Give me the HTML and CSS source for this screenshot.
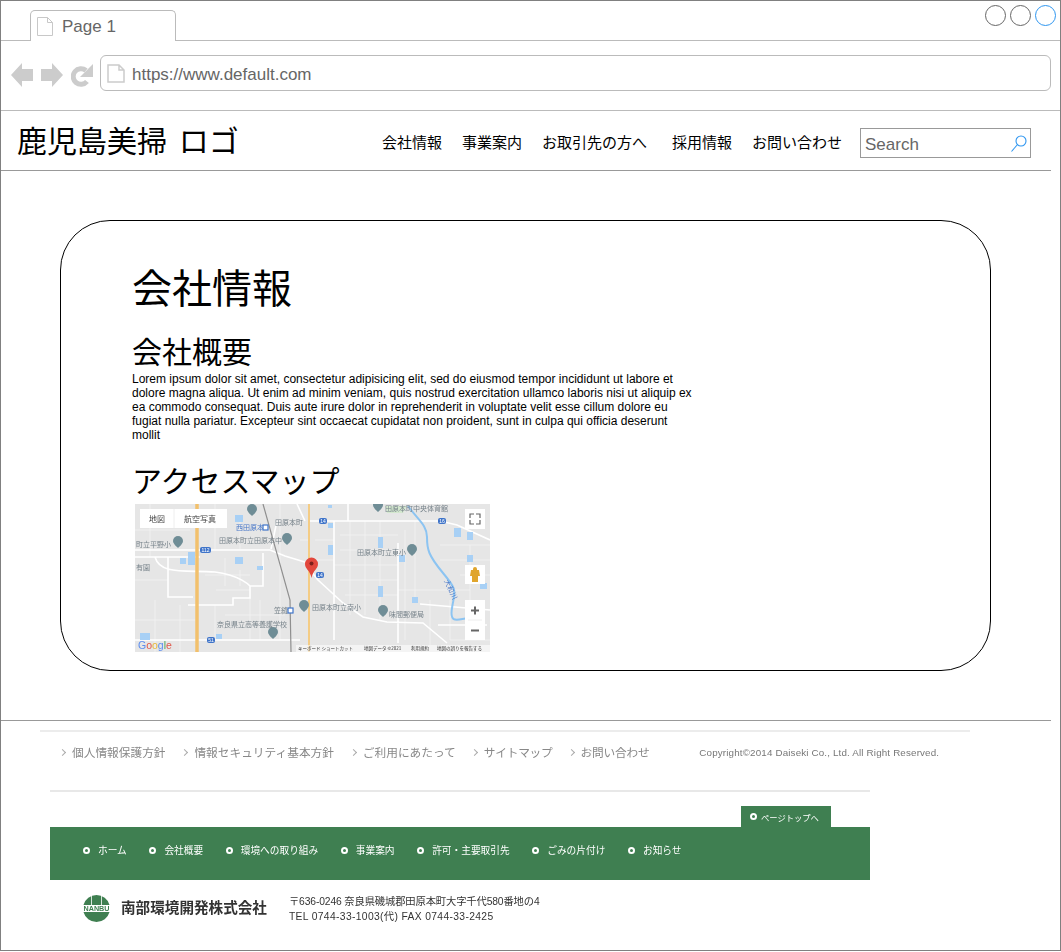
FILE: index.html
```html
<!DOCTYPE html>
<html lang="ja">
<head>
<meta charset="utf-8">
<title>鹿児島美掃</title>
<link rel="stylesheet" href="styles.css">
</head>
<body>
<div class="window">
  <div class="tabbar">
    <div class="tab">
      <svg class="file-icon" viewBox="0 0 16 19"><path d="M.5.5h10l5 5v13H.5zM10.500.5v5h5"/></svg>
      <span>Page 1</span>
    </div>
    <div class="controls"><i class="dot"></i><i class="dot"></i><i class="dot dot-active"></i></div>
  </div>
  <div class="toolbar">
    <svg class="nav-icon" viewBox="0 0 23 24"><path d="M0 12 11 0v6h11v12H11v6z"/></svg>
    <svg class="nav-icon" viewBox="0 0 23 24"><path d="M22 12 11 0v6H0v12h11v6z"/></svg>
    <svg class="nav-icon" viewBox="0 0 23 24"><path d="M16 18.500A7.800 7.800 0 1 1 15 7.500" class="reload"/><path d="M22 1v13H9z"/></svg>
    <div class="urlbar">
      <svg class="page-icon" viewBox="0 0 18 19"><path d="M1 1h11l5 5v12H1zM12 1v5h5"/></svg>
      <span>https://www.default.com</span>
    </div>
  </div>
  <header class="site-header">
    <div class="logo">鹿児島美掃 ロゴ</div>
    <nav class="main-nav">
      <a>会社情報</a><a>事業案内</a><a class="nav-wide">お取引先の方へ</a><a>採用情報</a><a>お問い合わせ</a>
    </nav>
    <div class="search">
      <span>Search</span>
      <svg class="search-icon" viewBox="0 0 16 17"><circle cx="10" cy="6" r="5"/><path d="M6.500 9.500 .5 16.500"/></svg>
    </div>
  </header>
  <main class="panel">
    <h1>会社情報</h1>
    <h2>会社概要</h2>
    <p>Lorem ipsum dolor sit amet, consectetur adipisicing elit, sed do eiusmod tempor incididunt ut labore et dolore magna aliqua. Ut enim ad minim veniam, quis nostrud exercitation ullamco laboris nisi ut aliquip ex ea commodo consequat. Duis aute irure dolor in reprehenderit in voluptate velit esse cillum dolore eu fugiat nulla pariatur. Excepteur sint occaecat cupidatat non proident, sunt in culpa qui officia deserunt mollit</p>
    <h2 class="access">アクセスマップ</h2>
    <svg class="map" viewBox="135 504 355 148">
      <rect class="m-bg" x="135" y="504" width="355" height="148"/>
      <g class="m-minor">
        <path d="M135 530H190M150 504V557M215 504V549M240 520V549M135 580H168M135 620H197M155 600V652M180 605V652M215 605V640M250 598V640M205 575H250M225 558V586M240 570V586M280 504V640M315 540H334M315 560H334M340 535H398M340 550H398M334 565H398M340 580H398M345 595H398M350 521V615M365 521V615M380 521V620M405 530V640M398 590H470M415 521V600M430 600V645M450 600V640M470 545V625M440 545H490M440 560H490M460 575H490M450 640H490M300 540H309M216 590H250M260 600V640M225 615H285"/>
      </g>
      <g class="m-road">
        <path d="M135 550H270L285 556 308 563M135 557H200M168 557V597H193M188 605H233V598H250V586H263V553M155 557C160 575 185 570 215 572 240 575 250 586 250 586M135 640H300M310 521H440L457 525 490 540M348 504V521M310 570 318 580 343 603 363 617 387 622 423 623 447 643M334 521V640M398 543V643M438 625H487M420 604 490 610M297 504 305 521M271 549 277 521"/>
      </g>
      <path class="m-highway" d="M197 504V652"/>
      <path class="m-highway-thin" d="M309 504V652"/>
      <path class="m-rail" d="M263 504 290 600 291 652"/>
      <path class="m-river" d="M408 506C418 520 427 525 427 537S428 555 443 573 455 590 452 608 460 618 470 618"/>
      <g class="m-water">
        <rect x="188" y="552" width="7" height="13"/><rect x="180" y="558" width="6" height="6"/>
        <rect x="235" y="557" width="8" height="7"/><rect x="257" y="566" width="6" height="4"/>
        <rect x="140" y="633" width="10" height="7"/><rect x="216" y="634" width="6" height="5"/>
        <rect x="235" y="515" width="8" height="7"/><rect x="328" y="545" width="5" height="10"/>
        <rect x="378" y="537" width="5" height="11"/><rect x="378" y="586" width="5" height="11"/>
        <rect x="412" y="597" width="6" height="6"/><rect x="399" y="555" width="6" height="7"/>
        <rect x="454" y="528" width="7" height="9"/><rect x="467" y="532" width="6" height="8"/>
        <rect x="467" y="555" width="6" height="7"/><rect x="480" y="583" width="7" height="6"/>
        <rect x="328" y="523" width="5" height="5"/><rect x="328" y="505" width="4" height="3"/>
      </g>
      <path class="m-park" d="M385 506h22l-4 7h-16z"/>
      <g class="m-pin">
        <path d="M247 509a5 5 0 0 1 10 0c0 3-5 7-5 7s-5-4-5-7z"/>
        <path d="M173 541a5 5 0 0 1 10 0c0 3-5 7-5 7s-5-4-5-7z"/>
        <path d="M282 538a5 5 0 0 1 10 0c0 3-5 7-5 7s-5-4-5-7z"/>
        <path d="M299 605a5 5 0 0 1 10 0c0 3-5 7-5 7s-5-4-5-7z"/>
        <path d="M268 632a5 5 0 0 1 10 0c0 3-5 7-5 7s-5-4-5-7z"/>
        <path d="M407 549a5 5 0 0 1 10 0c0 3-5 7-5 7s-5-4-5-7z"/>
        <path d="M378 610a5 5 0 0 1 10 0c0 3-5 7-5 7s-5-4-5-7z"/>
        <path d="M373 505a5 5 0 0 1 10 0c0 3-5 7-5 7s-5-4-5-7z"/>
      </g>
      <g class="m-label">
        <text x="275" y="525">田原本町</text>
        <text class="m-blue" x="236" y="529.500">西田原本</text>
        <text x="219" y="542.500">田原本町立田原本中</text>
        <text x="136" y="546.500">町立平野小</text>
        <text x="217" y="626.500">奈良県立高等養護学校</text>
        <text x="274" y="612.500">笠縫</text>
        <text x="357" y="554.500">田原本町立東小</text>
        <text x="312" y="609.500">田原本町立南小</text>
        <text x="389" y="616.500">味間郵便局</text>
        <text x="385" y="510.500">田原本町中央体育館</text>
        <text x="136" y="569.500">有園</text>
        <text class="m-blue" transform="translate(444 581) rotate(65)">大和川</text>
      </g>
      <g class="m-shield">
        <rect x="200" y="547" width="11" height="6" rx="2"/><text x="205.500" y="552">112</text>
        <rect x="207" y="637" width="8" height="6" rx="2"/><text x="211" y="642">51</text>
        <rect x="319" y="518" width="8" height="6" rx="2"/><text x="323" y="523">14</text>
        <rect x="438" y="518" width="8" height="6" rx="2"/><text x="442" y="523">16</text>
        <rect x="316" y="572" width="8" height="6" rx="2"/><text x="320" y="577">14</text>
      </g>
      <g class="m-station"><rect x="263" y="525" width="5" height="5"/><rect x="288" y="608" width="5" height="5"/></g>
      <path class="m-marker" d="M305 564a6.500 6.500 0 0 1 13 0c0 5-5 6-6.500 14-1.500-8-6.500-9-6.500-14z"/>
      <circle class="m-marker-dot" cx="311.500" cy="563.500" r="2"/>
      <rect class="m-attr-bg" x="296" y="645" width="194" height="7"/>
      <g class="m-btn">
        <rect x="140" y="509" width="87" height="19"/>
        <rect x="465" y="509" width="20" height="20"/>
        <rect x="465" y="565" width="20" height="19"/>
        <rect x="465" y="600" width="20" height="40"/>
      </g>
      <path class="m-sep" d="M174 509V528M468 620H482"/>
      <g class="m-btn-text">
        <text x="157" y="522">地図</text>
        <text x="200" y="522">航空写真</text>
      </g>
      <path class="m-full" d="M470 518v-4h4M476 514h4v4M480 520v4h-4M474 524h-4v-4"/>
      <path class="m-peg" d="M473 569a2 2 0 0 1 4 0v1h2l1 6h-2v6h-6v-6h-2l1-6h2z"/>
      <path class="m-zoom" d="M471 610.500h8M475 606.500v8M471 630.500h8"/>
      <text class="m-google" x="138" y="649"><tspan class="g-b">G</tspan><tspan class="g-r">o</tspan><tspan class="g-y">o</tspan><tspan class="g-b">g</tspan><tspan class="g-g">l</tspan><tspan class="g-r">e</tspan></text>
      <g class="m-attr">
        <text x="298" y="650">キーボード ショートカット</text>
        <text x="364" y="650">地図データ ©2021</text>
        <text x="411" y="650">利用規約</text>
        <text x="437" y="650">地図の誤りを報告する</text>
      </g>
    </svg>
  </main>
  <footer class="site-footer">
    <div class="legal">
      <a>個人情報保護方針</a><a>情報セキュリティ基本方針</a><a>ご利用にあたって</a><a class="tight">サイトマップ</a><a class="tight">お問い合わせ</a>
      <span class="copyright">Copyright©2014 Daiseki Co., Ltd. All Right Reserved.</span>
    </div>
    <div class="footer-main">
      <div class="top-link"><a class="bullet">ページトップへ</a></div>
      <nav class="green-nav">
        <a class="bullet">ホーム</a><a class="bullet">会社概要</a><a class="bullet">環境への取り組み</a><a class="bullet">事業案内</a><a class="bullet">許可・主要取引先</a><a class="bullet">ごみの片付け</a><a class="bullet">お知らせ</a>
      </nav>
      <div class="company">
        <svg class="company-logo" viewBox="0 0 27 27">
          <path class="logo-green" d="M.47 10A13.500 13.500 0 0 1 26.530 10zM.47 17h26.060A13.500 13.500 0 0 1 .47 17z"/>
          <path class="logo-cut" d="M8.500 0V10M18.500 0V10"/>
          <text x="13.500" y="16">NANBU</text>
        </svg>
        <strong>南部環境開発株式会社</strong>
        <address><span class="addr-street">〒636-0246 奈良県磯城郡田原本町大字千代580番地の4</span><span class="addr-tel">TEL 0744-33-1003(代) FAX 0744-33-2425</span></address>
      </div>
    </div>
  </footer>
</div>
</body>
</html>
```
FILE: styles.css
```css
*, *::before { box-sizing: border-box; }
html, body { margin: 0; padding: 0; background: #fff; }
body { font-family: "Liberation Sans", "Noto Sans CJK JP", sans-serif; color: #000; overflow: hidden; }
a { color: inherit; text-decoration: none; }
h1, h2, p, address { margin: 0; font-style: normal; font-weight: 400; }

.window { width: 1061px; height: 951px; border: 1px solid #808080; overflow: hidden; }

.tabbar { height: 40px; display: flex; justify-content: space-between; border-bottom: 1px solid #bbb; }
.tab { width: 146px; height: 31px; margin: 9px 0 -1px 29px; display: flex; align-items: center; gap: 9px; padding: 0 0 0 6px; background: #fff; border: 1px solid #bbb; border-bottom: 0; border-radius: 5px 5px 0 0; color: #666; font-size: 17px; }
.tab span { padding-top: 1px; }
.file-icon { width: 16px; height: 19px; fill: none; stroke: #c8c8c8; }
.controls { display: flex; gap: 4px; padding: 4px 4px 0 0; }
.dot { width: 21px; height: 21px; border: 1px solid #666; border-radius: 50%; }
.dot-active { border-color: #2e96f0; }

.toolbar { height: 70px; padding: 14px 9px 0 10px; display: flex; gap: 7px; align-items: flex-start; border-bottom: 1px solid #bbb; }
.nav-icon { width: 23px; height: 24px; margin-top: 8px; fill: #ccc; flex: none; }
.nav-icon .reload { fill: none; stroke: #ccc; stroke-width: 5; }
.urlbar { flex: 1; height: 36px; margin-left: -1px; display: flex; align-items: center; gap: 7px; padding: 0 0 0 6px; border: 1px solid #bbb; border-radius: 6px; color: #666; font-size: 17px; }
.urlbar span { padding-top: 3px; }
.page-icon { width: 18px; height: 19px; fill: none; stroke: #ccc; stroke-width: 1.500; }

.site-header { width: 1050px; height: 60px; display: flex; align-items: center; padding: 0 0 0 16px; border-bottom: 1px solid #999; }
.logo { font-size: 30px; line-height: 40px; margin-top: -4px; white-space: pre; word-spacing: 5px; font-family: "Noto Sans CJK JP", sans-serif; }
.main-nav { margin-left: auto; display: flex; gap: 20px; font-size: 15px; margin-right: 18px; margin-top: 1px; font-family: "Noto Sans CJK JP", sans-serif; }
.nav-wide { margin-right: 5px; }
.search { width: 171px; height: 30px; margin-right: 20px; margin-top: 5px; display: flex; align-items: center; justify-content: space-between; padding: 0 3px 0 4px; border: 1px solid #999; color: #666; font-size: 17px; }
.search span { padding-top: 3px; }
.search-icon { width: 16px; height: 17px; fill: none; stroke: #2e96f0; stroke-width: 1.100; }

.panel { width: 931px; height: 451px; margin: 49px 0 0 59px; padding: 41px 0 0 71px; border: 1px solid #000; border-radius: 50px; }
.panel h1 { font-size: 40px; line-height: 48px; font-family: "Noto Sans CJK JP", sans-serif; }
.panel h2 { font-size: 30px; line-height: 36px; margin-top: 22px; font-family: "Noto Sans CJK JP", sans-serif; }
.panel p { width: 562px; font-size: 12px; line-height: 14px; margin-top: 4px; }
.panel .access { margin-top: 19px; }
.map { display: block; width: 355px; height: 148px; margin: 7px 0 0 3px; filter: blur(.4px); font-family: "Noto Sans CJK JP", sans-serif; }
.m-bg { fill: #e6e6e6; }
.m-minor path { fill: none; stroke: #f3f3f3; stroke-width: .8; }
.m-road path { fill: none; stroke: #fff; stroke-width: 1.600; }
.m-highway { fill: none; stroke: #f2c06c; stroke-width: 3.500; }
.m-highway-thin { fill: none; stroke: #f4cc85; stroke-width: 2; }
.m-rail { fill: none; stroke: #8f8f8f; stroke-width: 1.200; }
.m-river { fill: none; stroke: #8cc4f2; stroke-width: 2; }
.m-water rect { fill: #a8d0f5; }
.m-park { fill: #d4e8cf; }
.m-pin path { fill: #6f8d96; }
.m-label text { fill: #76828a; font-size: 7px; }
.m-label .m-blue { fill: #4a78c8; }
.m-shield rect { fill: #3f74c9; }
.m-shield text { fill: #fff; font-size: 5px; text-anchor: middle; font-family: "Liberation Sans", sans-serif; }
.m-station rect { fill: #fff; stroke: #3f74c9; stroke-width: 1.200; }
.m-marker { fill: #e2473c; }
.m-marker-dot { fill: #7d1f1a; }
.m-attr-bg { fill: #fff; fill-opacity: .55; }
.m-btn rect { fill: #fff; }
.m-sep { stroke: #eee; stroke-width: 1; }
.m-btn-text text { fill: #444; font-size: 8px; text-anchor: middle; }
.m-full { fill: none; stroke: #666; stroke-width: 1.200; }
.m-peg { fill: #e0a52c; }
.m-zoom { fill: none; stroke: #666; stroke-width: 2; }
.m-google { font-family: "Liberation Sans", sans-serif; font-size: 10.500px; }
.g-b { fill: #5b8def; }
.g-r { fill: #e0574a; }
.g-y { fill: #eab93a; }
.g-g { fill: #4fa860; }
.m-attr text { fill: #333; font-size: 4.500px; }

.site-footer { width: 1050px; height: 230px; margin-top: 49px; border-top: 1px solid #999; filter: blur(.25px); font-family: "Liberation Sans", "Noto Sans CJK JP", sans-serif; }
.legal { width: 930px; height: 60px; margin: 9px 0 0 39px; padding: 12px 0 0 20px; display: flex; align-items: flex-start; gap: 16.900px; border-top: 2px solid #ececec; color: #888; font-size: 11.700px; line-height: 17px; white-space: nowrap; }
.legal a { display: flex; align-items: center; gap: 7px; }
.legal a::before { content: ""; width: 5px; height: 5px; border-top: 1px solid #aaa; border-right: 1px solid #aaa; transform: rotate(45deg); }
.legal .tight { letter-spacing: -.2px; margin-left: -1px; }
.copyright { margin-left: 33px; font-size: 9.800px; letter-spacing: .16px; color: #777; }
.footer-main { width: 820px; margin-left: 49px; border-top: 2px solid #e8e8e8; }
.top-link { display: flex; justify-content: flex-end; padding: 14px 39px 0 0; }
.top-link a { width: 90px; height: 21px; background: #3f7f51; padding-left: 9px; color: #fff; font-size: 8.300px; }
.bullet { display: flex; align-items: center; gap: 4px; white-space: nowrap; }
.bullet::before { content: ""; flex: none; width: 7px; height: 7px; border: 2px solid #fff; border-radius: 50%; background: #3f7f51; }
.green-nav { height: 53px; padding: 0 0 7px 33px; display: flex; align-items: center; gap: 22.600px; background: #3f7f51; color: #fff; font-size: 9.700px; }
.green-nav .bullet { gap: 8px; }
.company { display: flex; align-items: center; padding: 12px 0 0 33px; }
.company-logo { width: 27px; height: 27px; flex: none; }
.logo-green { fill: #3f7f51; }
.logo-cut { fill: none; stroke: #fff; stroke-width: .8; }
.company-logo text { fill: #3f7f51; font-size: 7.200px; font-weight: 700; text-anchor: middle; font-family: "Liberation Sans", sans-serif; }
.company strong { margin: -3px 0 0 11px; font-size: 14.600px; font-weight: 700; color: #333; white-space: nowrap; }
.company address { margin: 3px 0 0 22px; font-size: 10.300px; line-height: 14.500px; color: #333; white-space: nowrap; }
.addr-street, .addr-tel { display: block; }
.addr-street { letter-spacing: -.13px; }
.addr-tel { letter-spacing: .35px; }
```
